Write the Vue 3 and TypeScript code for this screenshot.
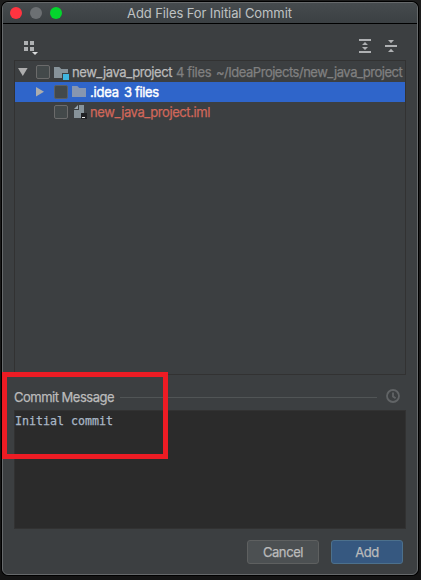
<script setup lang="ts">
import { ref } from 'vue'

const message = ref('Initial commit')
</script>

<template>
  <div class="desktop">
    <section class="window">
      <header class="titlebar">
        <div class="lights">
          <span class="light close"></span>
          <span class="light minimize"></span>
          <span class="light zoom"></span>
        </div>
        <h1 class="title">Add Files For Initial Commit</h1>
      </header>

      <div class="content">
        <div class="toolbar">
          <svg class="group-icon" width="15" height="15" viewBox="0 0 15 15">
            <path d="M0 0h4v4H0zM6 0h4v4H6zM0 6h4v4H0zM6 6h4v4H6z" fill="#afb1b3" />
            <path d="M8 11h6l-3 3z" fill="#dadcdd" />
          </svg>
          <span class="spacer"></span>
          <svg width="12" height="14" viewBox="0 0 12 14" fill="#afb1b3">
            <path d="M0 0h12v2H0zM0 12h12v2H0zM6 3l3 3H3zM3 8h6l-3 3z" />
          </svg>
          <svg class="collapse" width="12" height="14" viewBox="0 0 12 14" fill="#afb1b3">
            <path d="M0 6h12v2H0zM3 1h6L6 4.3zM6 9.7L9 13H3z" />
          </svg>
        </div>

        <div class="tree">
          <div class="row root">
            <svg class="arrow" width="10" height="8" viewBox="0 0 10 8"><path d="M0 0h9.6L4.8 8z" fill="#adadad" /></svg>
            <span class="check"></span>
            <svg class="icon" width="16" height="14" viewBox="0 0 16 14">
              <path d="M0 1h5.3l2 2H14v9H0z" fill="#87939a" />
              <path d="M8 7h8v7H8z" fill="#3c3f41" />
              <path d="M9 8h6v6H9z" fill="#40b6e0" />
            </svg>
            <span class="name t-root">new_java_project</span>
            <span class="muted t-count">4 files</span>
            <span class="muted t-path">~/IdeaProjects/new_java_project</span>
          </div>
          <div class="row selected">
            <svg class="arrow" width="8" height="10" viewBox="0 0 8 10"><path d="M0 0l8 4.8L0 9.6z" fill="#adadad" /></svg>
            <span class="check"></span>
            <svg class="icon" width="16" height="14" viewBox="0 0 16 14">
              <path d="M0 1h5.3l2 2H14v9H0z" fill="#8796b0" />
            </svg>
            <span class="name t-idea">.idea</span>
            <span class="t-three">3 files</span>
          </div>
          <div class="row file">
            <span class="check"></span>
            <svg class="icon" width="16" height="16" viewBox="0 0 16 16">
              <path d="M7 1h5v13H2V6h5z" fill="#87939a" />
              <path d="M6 1v4H2z" fill="#9aa7b0" />
              <path d="M9 9h6v6H9z" fill="#202124" />
              <path d="M10 13h3v1h-3z" fill="#e8e8e8" />
            </svg>
            <span class="name t-iml">new_java_project.iml</span>
          </div>
        </div>

        <div class="section-head">
          <label class="section-label" for="message">Commit Message</label>
          <span class="rule"></span>
          <svg class="history" width="14" height="14" viewBox="0 0 14 14" fill="none" stroke="#616466">
            <circle cx="7" cy="7" r="6" stroke-width="1.8" />
            <path d="M7 3.5v4l2.6 1.8" stroke-width="1.8" />
          </svg>
        </div>

        <textarea id="message" v-model="message" class="editor" spellcheck="false"></textarea>

        <footer class="actions">
          <button class="btn" type="button">Cancel</button>
          <button class="btn primary" type="button">Add</button>
        </footer>
      </div>
      <div class="highlight"></div>
    </section>
  </div>
</template>

<style>
body {
  background: #161616;
}
</style>

<style scoped>
* {
  box-sizing: border-box;
}

.desktop {
  width: 421px;
  height: 580px;
  padding: 2px 3px 5px 2px;
  overflow: hidden;
  background: linear-gradient(#1d1d1d, #141414);
  font-family: Inter, "Liberation Sans", sans-serif;
  font-size: 13px;
  color: #bbb;
}

.window {
  position: relative;
  width: 416px;
  height: 573px;
  border: 1px solid #66696b;
  border-radius: 6px;
  background: #3c3f41;
  box-shadow: 0 0 0 1px #000;
}

.titlebar {
  display: flex;
  align-items: center;
  height: 21px;
  padding-left: 7px;
  border-bottom: 1px solid #000;
  border-radius: 5px 5px 0 0;
  background: linear-gradient(#464b4e, #3b4043);
}

.lights {
  display: flex;
  gap: 8px;
}

.light {
  width: 12px;
  height: 12px;
  border-radius: 50%;
}

.close { background: #ff3440; }
.minimize { background: #6c7073; }
.zoom { background: #04d52d; }

.title {
  margin: 0 0 0 65px;
  font-size: 13px;
  font-weight: 400;
  line-height: 20px;
  letter-spacing: -0.09px;
  white-space: nowrap;
  color: #bfc2c3;
}

.content {
  padding: 0 11px;
}

.toolbar {
  display: flex;
  align-items: center;
  height: 36px;
  padding: 8px 9px 0 10px;
}

.group-icon {
  margin-top: 4px;
}

.spacer {
  flex: 1;
}

.collapse {
  margin-left: 14px;
}

.tree {
  height: 315px;
  padding-top: 1px;
  border: 1px solid #323232;
  overflow: hidden;
  -webkit-text-stroke: 0.25px currentColor;
}

.row {
  display: flex;
  align-items: center;
  height: 20px;
  line-height: 20px;
  white-space: nowrap;
}

.row > * { flex: none; }

.root { padding-left: 3px; }
.selected { padding-left: 21px; background: #2f65ca; color: #fff; -webkit-text-stroke-width: 0.4px; }
.file { padding-left: 39px; color: #d1675a; }

.check {
  width: 14px;
  height: 14px;
  border: 1px solid #6b6b6b;
  border-radius: 2px;
  background: #43494a;
}

.root .check { margin-left: 8px; }
.selected .check { margin-left: 10px; border-color: #5b6064; }

.icon { margin-left: 4px; }
.root .icon { margin-top: 2px; }

.name { margin-left: 2px; }
.muted { color: #808080; }
.t-root { width: 104px; letter-spacing: -0.43px; }
.t-count { width: 40px; letter-spacing: -0.35px; }
.t-path { letter-spacing: -0.48px; }
.t-idea { width: 34px; letter-spacing: -0.2px; }
.t-three { letter-spacing: -0.35px; }
.t-iml { letter-spacing: -0.42px; }

.section-head {
  display: flex;
  align-items: center;
  height: 35px;
  padding: 10px 6px 2px 0;
}

.section-label {
  flex: none;
  width: 106px;
  line-height: 20px;
  letter-spacing: -0.5px;
  white-space: nowrap;
  -webkit-text-stroke: 0.25px currentColor;
}

.rule {
  flex: 1;
  height: 1px;
  margin: 1px 9px 0 0;
  background: #515556;
}

.history {
  flex: none;
  margin-top: -2px;
}

.editor {
  display: block;
  width: 392px;
  height: 119px;
  padding: 2px 0 0;
  border: 1px solid #323232;
  outline: none;
  resize: none;
  background: #2b2b2b;
  color: #a9b7c6;
  font: 11.63px/16px "DejaVu Sans Mono", monospace;
  -webkit-text-stroke: 0.25px currentColor;
}

.actions {
  display: flex;
  justify-content: flex-end;
  gap: 12px;
  padding: 11px 3px 0 0;
}

.btn {
  width: 72px;
  height: 24px;
  padding: 0;
  border: 1px solid #5e6060;
  border-radius: 3px;
  background: #4c5052;
  font: inherit;
  line-height: 22px;
  letter-spacing: -0.4px;
  color: #bbb;
  -webkit-text-stroke: 0.25px currentColor;
}

.primary {
  border-color: #4c708c;
  background: #365880;
}

.highlight {
  position: absolute;
  top: 369px;
  left: -1px;
  width: 166px;
  height: 87px;
  border: 5px solid #ed1c24;
}
</style>
